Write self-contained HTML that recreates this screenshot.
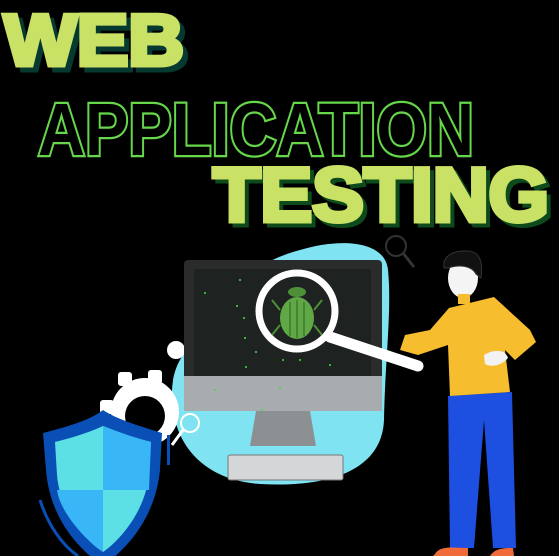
<!DOCTYPE html>
<html><head><style>
html,body{margin:0;padding:0;background:#000;}
svg{display:block}
</style></head><body>
<svg width="559" height="556" viewBox="0 0 559 556" xmlns="http://www.w3.org/2000/svg">
<rect width="559" height="556" fill="#000"/>
<g font-family="Liberation Sans, sans-serif" font-weight="bold">
<text x="9" y="70" font-size="72" textLength="180" lengthAdjust="spacingAndGlyphs" fill="#063a30" stroke="#063a30" stroke-width="5">WEB</text>
<text x="4" y="65" font-size="72" textLength="180" lengthAdjust="spacingAndGlyphs" fill="#c9e265" stroke="#c9e265" stroke-width="5">WEB</text>
<text x="38" y="155" font-size="74" textLength="436" lengthAdjust="spacingAndGlyphs" fill="#000" stroke="#66d64a" stroke-width="4.5" style="paint-order:stroke">APPLICATION</text>
<text x="217" y="225" font-size="76" textLength="336" lengthAdjust="spacingAndGlyphs" fill="#0d4a1c" stroke="#0d4a1c" stroke-width="5">TESTING</text>
<text x="213" y="221" font-size="76" textLength="336" lengthAdjust="spacingAndGlyphs" fill="#c9e265" stroke="#c9e265" stroke-width="5">TESTING</text>
</g>
<path d="M300 250 C340 238 385 240 388 270 C392 310 385 360 384 420 C382 470 330 488 260 484 C200 480 170 440 172 390 C174 350 200 340 230 300 C250 270 270 258 300 250Z" fill="#7fe3f2"/>
<g fill="#fff">
<circle cx="145" cy="412" r="34"/>
<rect x="118" y="372" width="14" height="14" rx="3"/><rect x="148" y="370" width="14" height="14" rx="3"/>
<rect x="100" y="400" width="14" height="14" rx="3"/>
<circle cx="176" cy="350" r="9"/>
</g>
<circle cx="145" cy="416" r="20" fill="#000"/>
<rect x="184" y="260" width="198" height="151" rx="4" fill="#2a2c2c"/>
<rect x="194" y="269" width="177" height="107" fill="#1e2220"/>
<rect x="184" y="376" width="198" height="35" fill="#a9acae"/>
<path d="M256 411 L310 411 L316 446 L250 446Z" fill="#8d9092"/>
<rect x="228" y="455" width="115" height="25" rx="2" fill="#d4d6d8" stroke="#777" stroke-width="1"/>
<g fill="#3ee03e">
<circle cx="205" cy="293" r="1"/><circle cx="237" cy="306" r="1"/><circle cx="244" cy="318" r="1"/><circle cx="245" cy="338" r="1"/><circle cx="256" cy="352" r="1"/><circle cx="246" cy="367" r="1"/><circle cx="283" cy="360" r="1"/><circle cx="300" cy="360" r="1"/><circle cx="335" cy="340" r="1"/><circle cx="330" cy="365" r="1"/><circle cx="262" cy="410" r="1"/><circle cx="215" cy="390" r="1"/><circle cx="280" cy="388" r="1"/><circle cx="240" cy="280" r="1"/><circle cx="265" cy="300" r="1"/>
</g>
<line x1="330" y1="337" x2="418" y2="366" stroke="#fff" stroke-width="11" stroke-linecap="round"/>
<circle cx="297" cy="311" r="38" fill="#1e2220" stroke="#fff" stroke-width="7"/>
<ellipse cx="297" cy="318" rx="17" ry="21" fill="#5fa845"/>
<ellipse cx="297" cy="292" rx="9" ry="5" fill="#4e9038"/>
<path d="M297 300 V338 M290 302 V336 M304 302 V336" stroke="#3f7a2c" stroke-width="1.5"/>
<path d="M280 310 L272 300 M314 310 L322 300 M280 325 L272 335 M314 325 L322 335" stroke="#4e9038" stroke-width="2"/>
<circle cx="190" cy="423" r="9" fill="none" stroke="#fff" stroke-width="2"/>
<line x1="183" y1="430" x2="172" y2="445" stroke="#fff" stroke-width="3"/>
<circle cx="396" cy="246" r="10" fill="none" stroke="#333" stroke-width="2"/>
<line x1="403" y1="253" x2="414" y2="267" stroke="#333" stroke-width="3"/>
<path d="M448 396 L512 392 L516 548 L493 548 L484 420 L474 548 L450 548Z" fill="#1d4fe0"/>
<path d="M435 554 C440 545 455 548 468 548 L468 556 L433 556Z" fill="#f06a3a"/>
<path d="M490 556 C495 548 505 548 513 548 L514 556Z" fill="#f06a3a"/>
<path d="M449 308 L494 297 L530 330 L536 342 L515 360 L505 350 L510 392 L450 396 L448 345 L418 355 L400 350 L405 335 L430 330Z" fill="#f6bd2e"/>
<path d="M484 355 C492 350 505 348 508 358 C502 365 492 368 485 364Z" fill="#f2f2f2"/>
<ellipse cx="463" cy="278" rx="15" ry="20" fill="#f4f4f4"/>
<path d="M444 268 C442 255 455 250 468 251 C480 252 483 262 481 278 L476 274 C472 266 460 264 448 268Z" fill="#111" stroke="#333"/>
<rect x="458" y="294" width="12" height="10" fill="#f6bd2e"/>
<path d="M43 433 C70 426 90 420 103 410 C118 420 140 426 162 433 L160 470 C155 520 125 550 103 566 C80 550 50 520 46 470Z" fill="#0a4fb5"/>
<path d="M55 442 C75 437 90 432 103 426 C118 432 132 437 151 442 L149 475 C145 512 120 540 103 552 C85 540 60 512 57 475Z" fill="#5ce0e6"/>
<path d="M103 426 C118 432 132 437 151 442 L149 490 L103 490Z M55 490 L103 490 L103 552 C85 540 60 512 57 490Z" fill="#38b6f5"/>
<path d="M40 500 C48 525 62 545 78 556" fill="none" stroke="#0a4fb5" stroke-width="3"/>
<rect x="167" y="435" width="3" height="30" fill="#0a4fb5"/>
</svg>
</body></html>
